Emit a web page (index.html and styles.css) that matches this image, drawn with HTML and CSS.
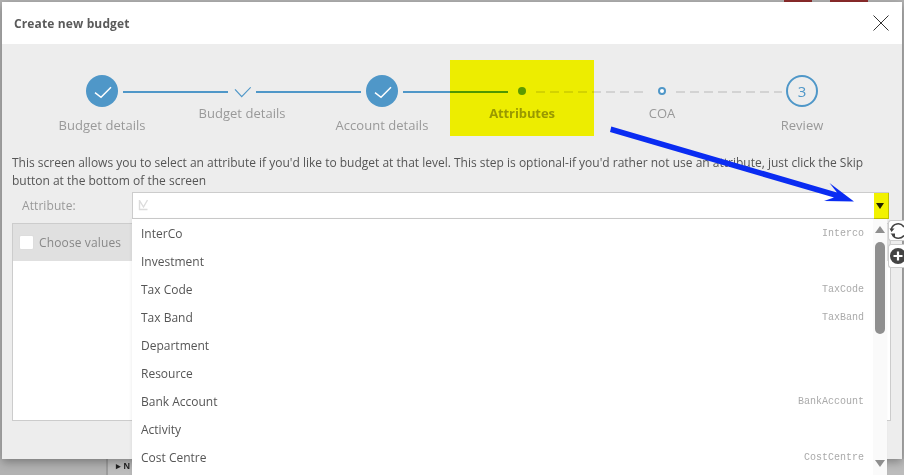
FILE: index.html
```html
<!DOCTYPE html>
<html lang="en">
<head>
<meta charset="utf-8">
<title>Create new budget</title>
<link rel="stylesheet" href="styles.css">
</head>
<body>
<div class="page">
  <div class="behind-top"><span class="tab tab-a"></span><span class="tab tab-b"></span></div>
  <div class="behind-bottom"><span class="tree-node">&#9656; N</span></div>
</div>
<section class="modal">
  <header class="modal-head">
    <h1 class="modal-title">Create new budget</h1>
    <svg class="close" width="16" height="16" viewBox="0 0 16 16"><path d="M.5.5l15 15M15.500.5l-15 15" fill="none" stroke="#333" stroke-width="1"/></svg>
  </header>
  <div class="modal-body">
    <ol class="stepper">
      <li class="step">
        <div class="track"><i class="line first"></i><span class="big-done"><svg width="32" height="32" viewBox="0 0 32 32"><path d="M9 17.700l6 4.600 10-10" fill="none" stroke="#fff" stroke-width="1.500"/></svg></span><i class="line blue"></i></div>
        <div class="label">Budget details</div>
      </li>
      <li class="step compact">
        <div class="track"><i class="line blue"></i><span class="small-done"><svg width="18" height="32" viewBox="0 0 18 32"><path d="M2 14.300l6.700 7.400 9-9.400" fill="none" stroke="#4f97c8" stroke-width="1.200"/></svg></span><i class="line blue"></i></div>
        <div class="label">Budget details</div>
      </li>
      <li class="step">
        <div class="track"><i class="line blue"></i><span class="big-done"><svg width="32" height="32" viewBox="0 0 32 32"><path d="M9 17.700l6 4.600 10-10" fill="none" stroke="#fff" stroke-width="1.500"/></svg></span><i class="line blue"></i></div>
        <div class="label">Account details</div>
      </li>
      <li class="step compact current">
        <div class="track"><i class="line blue"></i><span class="dot-wrap"><span class="dot"></span></span><i class="line dashed"></i></div>
        <div class="label">Attributes</div>
      </li>
      <li class="step compact">
        <div class="track"><i class="line dashed"></i><span class="dot-wrap"><span class="ring"></span></span><i class="line dashed"></i></div>
        <div class="label">COA</div>
      </li>
      <li class="step">
        <div class="track"><i class="line dashed"></i><span class="big-todo">3</span><i class="line last"></i></div>
        <div class="label">Review</div>
      </li>
    </ol>
    <p class="intro">This screen allows you to select an attribute if you'd like to budget at that level. This step is optional-if you'd rather not use an attribute, just click the Skip button at the bottom of the screen</p>
    <div class="field">
      <label class="field-label">Attribute:</label>
      <div class="combo">
        <svg class="combo-icon" width="11" height="12" viewBox="0 0 11 12"><path d="M1.500 1v9.500h8M1.500 1.500l4 6.500 4-7" fill="none" stroke="#dcdcdc" stroke-width="1.400"/></svg>
        <span class="combo-arrow"></span>
        <div class="dropdown">
          <ul class="options">
            <li class="option"><span>InterCo</span><code class="code">Interco</code></li>
            <li class="option"><span>Investment</span></li>
            <li class="option"><span>Tax Code</span><code class="code">TaxCode</code></li>
            <li class="option"><span>Tax Band</span><code class="code">TaxBand</code></li>
            <li class="option"><span>Department</span></li>
            <li class="option"><span>Resource</span></li>
            <li class="option"><span>Bank Account</span><code class="code">BankAccount</code></li>
            <li class="option"><span>Activity</span></li>
            <li class="option"><span>Cost Centre</span><code class="code">CostCentre</code></li>
          </ul>
          <div class="scrollbar"><span class="scroll-up"></span><span class="scroll-thumb"></span><span class="scroll-down"></span></div>
        </div>
        <div class="side-tools">
          <button class="side-btn refresh"><svg width="15" height="18" viewBox="0 0 15 18"><path d="M2.300 7.500A7 7 0 0 1 15 5M15 13.500A7 7 0 0 1 3.500 13" fill="none" stroke="#444" stroke-width="1.500"/><path d="M.5 6.500h5L2.500 10zM1.500 11.500h4.500v4.500z" fill="#444"/></svg></button>
          <button class="side-btn plus"><svg width="15" height="18" viewBox="0 0 15 18"><circle cx="9" cy="8" r="8" fill="#444"/><path d="M9 3.500v9M4.500 8h9" stroke="#fff" stroke-width="2.200"/></svg></button>
        </div>
      </div>
    </div>
    <div class="panel">
      <div class="panel-head"><span class="checkbox"></span><span class="panel-title">Choose values</span></div>
    </div>
  </div>
</section>
<div class="highlight hl-step"></div>
<div class="highlight hl-arrow"></div>
<svg class="pointer" width="904" height="475" viewBox="0 0 904 475"><path d="M611.300 126.500L837 192.500l-7.500-9.500L854 201.500l-30-.5 10-3.500L610 132z" fill="#0a2cf2"/></svg>
</body>
</html>
```
FILE: styles.css
```css
* { box-sizing: border-box; }
html, body { margin: 0; height: 475px; overflow: hidden; }
body { font-family: "Open Sans", "Noto Sans", sans-serif; background: #b2b2b2; color: #555; position: relative; }
.page { height: 475px; display: flex; flex-direction: column; justify-content: space-between; }
.behind-top { display: flex; gap: 18px; padding-left: 784px; height: 2px; }
.tab { height: 2px; background: #8e2c2c; }
.tab-a { width: 28px; }
.tab-b { width: 38px; }
.behind-bottom { height: 16px; margin-left: 106px; border-left: 2px solid #9c9c9c; padding-left: 8px; background: #bcbcbc; }
.tree-node { display: block; font: bold 9px/14px "Liberation Sans", sans-serif; color: #222; }

.modal { position: absolute; left: 2px; top: 2px; width: 900px; height: 457px; background: #ededed; box-shadow: 0 3px 9px rgba(0,0,0,.32); }
.modal-head { height: 42px; background: #fff; display: flex; align-items: center; justify-content: space-between; padding: 0 13px 0 12px; }
.modal-title { margin: 0; font-size: 12px; font-weight: 700; color: #5a5a5a; letter-spacing: .13px; }
.close { display: block; }
.modal-body { padding: 0 10px; }

.stepper { list-style: none; margin: 0; padding: 31px 0 0 20px; height: 110px; display: flex; }
.step { width: 140px; display: flex; flex-direction: column; align-items: center; }
.track { width: 140px; height: 32px; display: flex; align-items: center; }
.line { flex: 1; height: 2px; margin-top: 2px; }
.line.blue { background: #4f97c8; }
.line.dashed { background: repeating-linear-gradient(90deg, #d3d3d3 0 9px, transparent 9px 14px); }
.big-done, .big-todo { width: 32px; height: 32px; border-radius: 50%; flex: none; margin: 0 5px; }
.big-done { background: #4f97c8; }
.big-done svg, .small-done svg { display: block; }
.big-todo { border: 2px solid #4f97c8; color: #4f97c8; font-size: 15px; line-height: 28px; text-align: center; margin: 0 4px; }
.small-done { width: 18px; flex: none; margin: 0 5px; }
.dot-wrap { width: 8px; height: 8px; flex: none; margin: 0 10px; display: block; }
.dot { display: block; width: 8px; height: 8px; border-radius: 50%; background: #5b9a0c; }
.ring { display: block; width: 8px; height: 8px; border-radius: 50%; border: 2px solid #4f97c8; background: #fff; }
.line.first, .line.last { background: none; }
.label { margin-top: 9px; font-size: 13px; line-height: 18px; color: #999; white-space: nowrap; letter-spacing: .03px; }
.compact .label { margin-top: -3px; }
.current .label { font-weight: 700; letter-spacing: -.1px; }

.intro { margin: 0; font-size: 12px; line-height: 18px; color: #555; width: 885px; }
.field { display: flex; margin-top: 2px; padding-left: 10px; }
.field-label { width: 110px; font-size: 12px; line-height: 27px; color: #999; letter-spacing: .08px; }
.combo { position: relative; width: 757px; height: 27px; background: #fff; border: 1px solid #ccc; }
.combo-icon { position: absolute; left: 5px; top: 6px; }
.combo-arrow { position: absolute; right: 4px; top: 10px; border: 4px solid transparent; border-top: 6px solid #222; border-bottom: 0; }

.dropdown { position: absolute; left: -1px; top: 26px; width: 755px; height: 260px; background: #fff; display: flex; box-shadow: -1px 0 3px rgba(0,0,0,.06); z-index: 2; overflow: hidden; }
.options { list-style: none; margin: 0; padding: 0; flex: 1; }
.option { height: 28px; padding: 0 9px 0 9px; display: flex; justify-content: space-between; align-items: center; font-size: 12px; color: #555; }
.code { font: 10px "Liberation Mono", monospace; color: #aaa; }
.scrollbar { width: 14px; margin-right: 0; background: #fafafa; position: relative; display: flex; justify-content: center; }
.scroll-up, .scroll-down { position: absolute; left: 2px; border: 5px solid transparent; }
.scroll-up { top: 7px; border-top: 0; border-bottom: 7px solid #8f8f8f; }
.scroll-down { top: 241px; border-bottom: 0; border-top: 7px solid #8f8f8f; }
.scroll-thumb { position: absolute; left: 2px; top: 23px; width: 10px; height: 92px; border-radius: 5px; background: #8f8f8f; }

.side-tools { position: absolute; left: 755px; top: 27px; display: flex; flex-direction: column; gap: 3px; }
.side-btn { display: block; width: 16px; padding: 0; background: #fff; border: 1px solid #ccc; border-right: 0; border-radius: 3px 0 0 3px; }
.side-btn svg { display: block; }
.refresh { height: 21px; padding-top: 1px; }
.plus { height: 24px; padding-top: 2px; }

.panel { margin-top: 4px; width: 879px; height: 198px; background: #fff; border: 1px solid #ccc; }
.panel-head { height: 37px; background: #e0e0e0; display: flex; align-items: center; padding-left: 6px; gap: 5px; }
.checkbox { width: 15px; height: 15px; background: #fff; border: 1px solid #ddd; border-radius: 2px; }
.panel-title { font-size: 12px; color: #888; letter-spacing: .13px; }

.highlight { position: absolute; background: #ffff00; mix-blend-mode: multiply; }
.hl-step { left: 450px; top: 60px; width: 144px; height: 76px; }
.hl-arrow { left: 874px; top: 193px; width: 15px; height: 26px; background: #f2f200; }
.pointer { position: absolute; left: 0; top: 0; }
```
